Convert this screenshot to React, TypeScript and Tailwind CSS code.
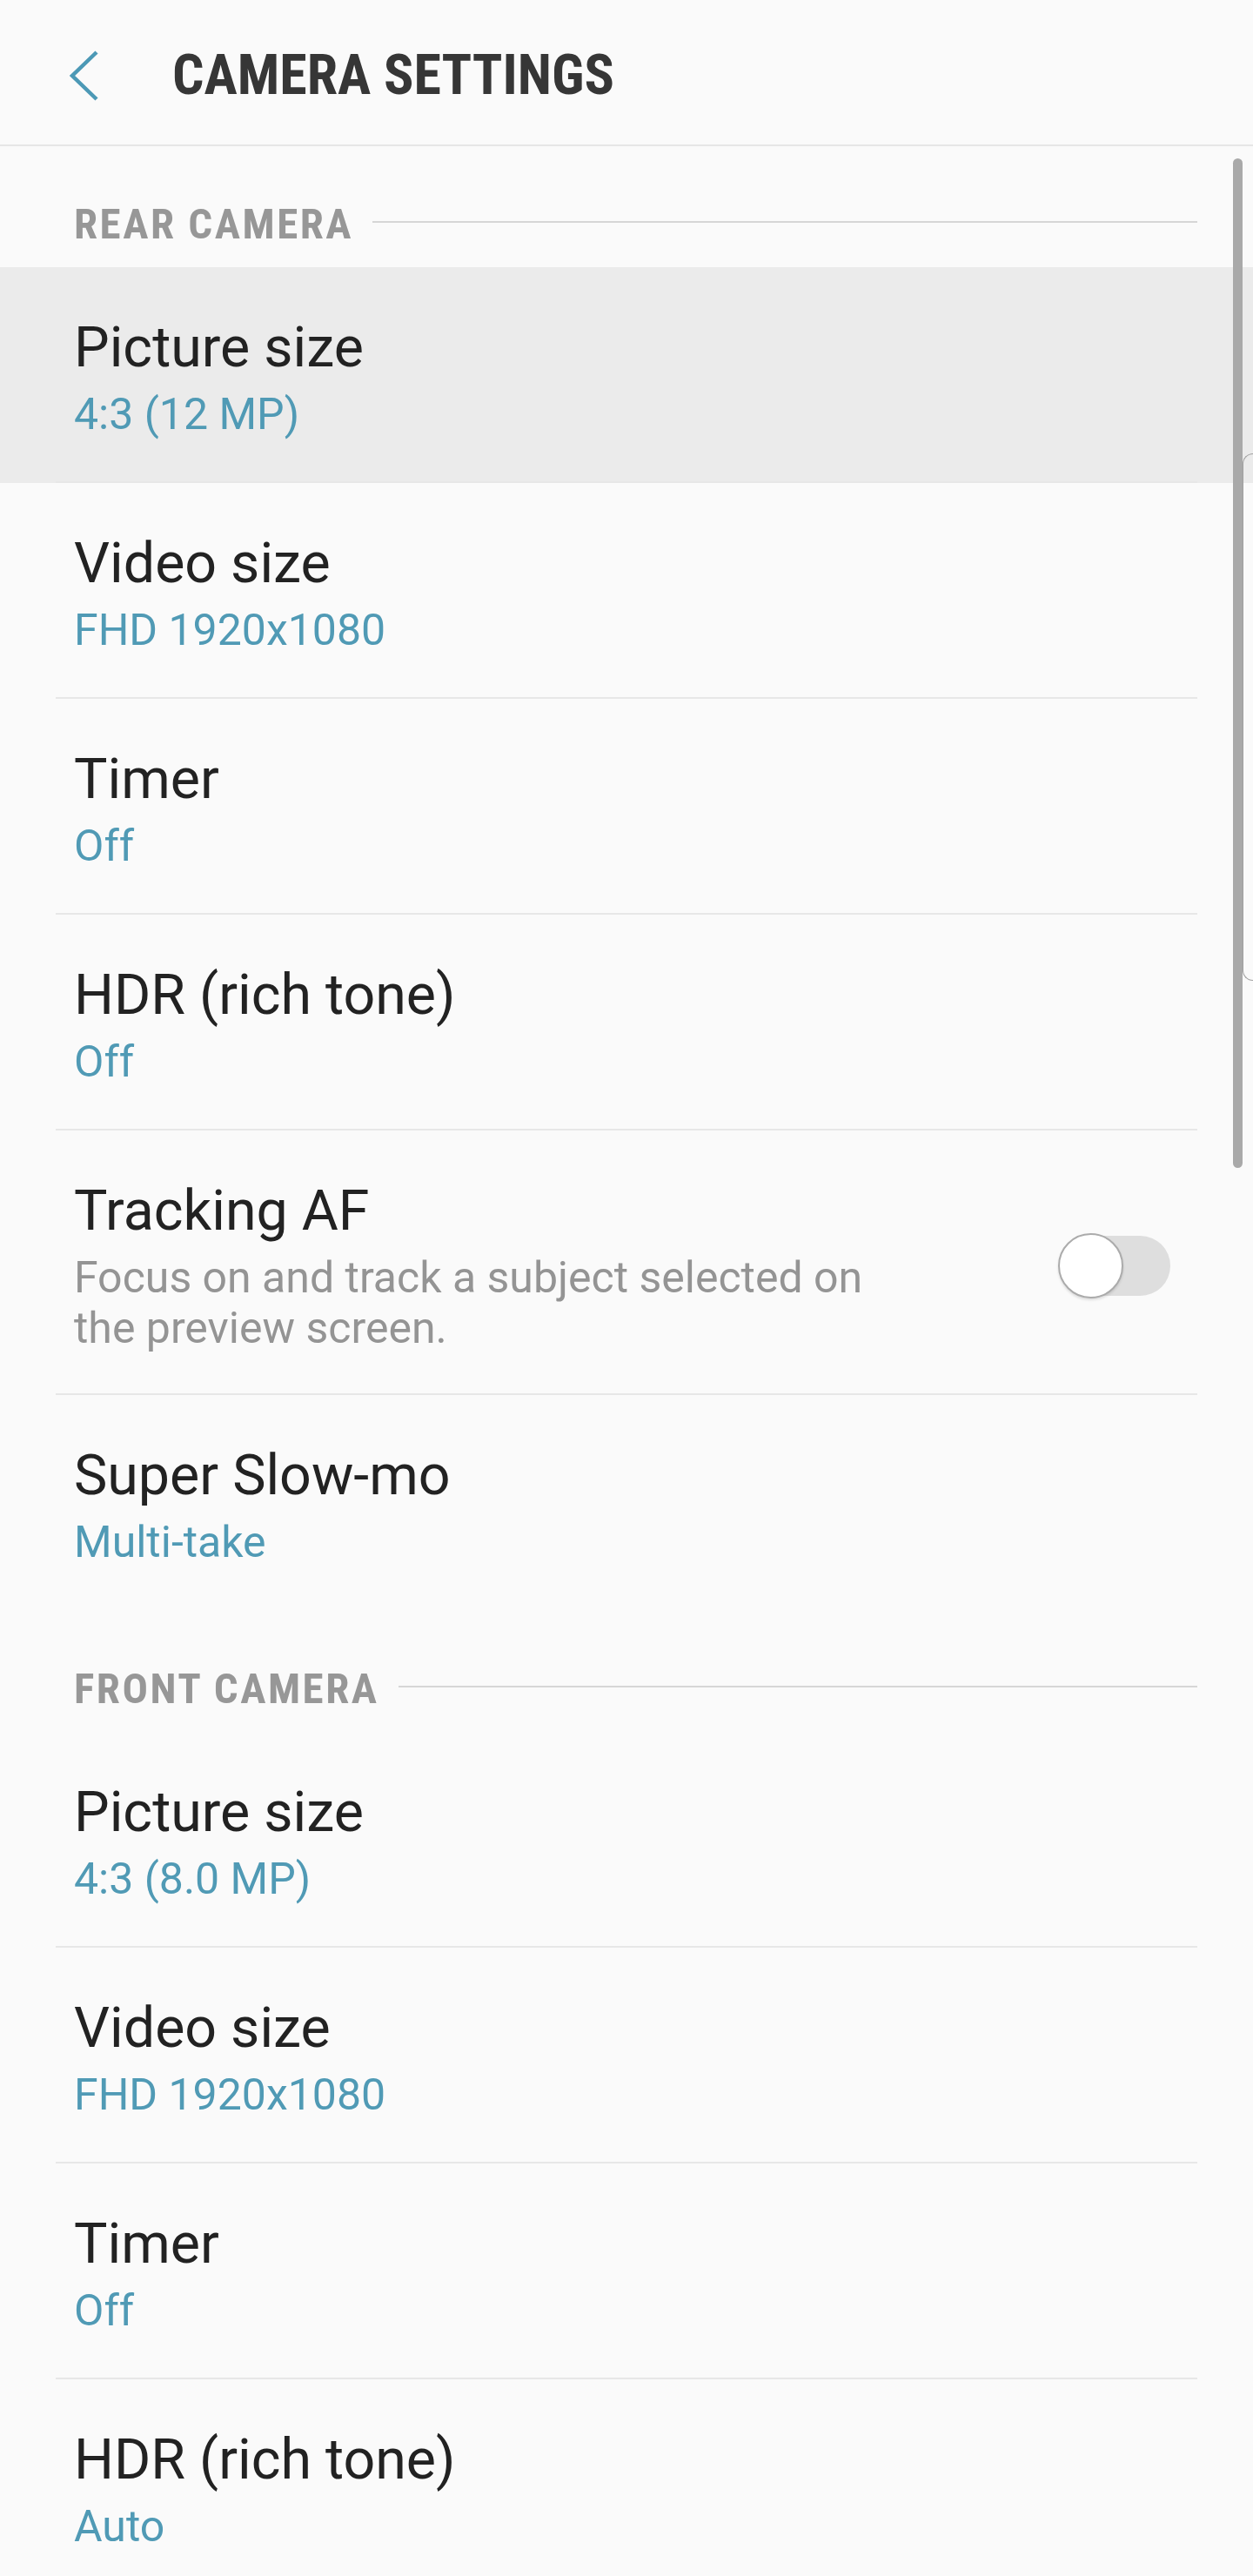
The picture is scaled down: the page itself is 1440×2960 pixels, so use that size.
import React from 'react';

type Item = {
  title: string;
  value?: string;
  desc?: string;
  toggle?: boolean;
  active?: boolean;
  tight?: boolean;
  noDivider?: boolean;
};

const rear: Item[] = [
  { title: 'Picture size', value: '4:3 (12 MP)', active: true },
  { title: 'Video size', value: 'FHD 1920x1080' },
  { title: 'Timer', value: 'Off' },
  { title: 'HDR (rich tone)', value: 'Off' },
  { title: 'Tracking AF', desc: 'Focus on and track a subject selected on the preview screen.', toggle: true, tight: true },
  { title: 'Super Slow-mo', value: 'Multi-take', noDivider: true },
];

const front: Item[] = [
  { title: 'Picture size', value: '4:3 (8.0 MP)' },
  { title: 'Video size', value: 'FHD 1920x1080' },
  { title: 'Timer', value: 'Off' },
  { title: 'HDR (rich tone)', value: 'Auto' },
];

function SectionHeader({ label }: { label: string }) {
  return (
    <div className="flex items-center pl-[85px] pr-[64px] pt-[62px] pb-[21px]">
      <span className="font-[Roboto_Condensed,Liberation_Sans_Narrow,DejaVu_Sans_Condensed,Roboto,sans-serif] [font-stretch:condensed] text-[49px] leading-[56px] font-bold tracking-[2.5px] text-[#979797]">
        {label}
      </span>
      <div className="ml-[22px] mb-[6px] h-[2px] flex-1 bg-[#d6d6d6]" />
    </div>
  );
}

function Toggle() {
  return (
    <div className="relative h-[75px] w-[129px] shrink-0">
      <div className="absolute right-0 top-[3px] h-[69px] w-[118px] rounded-full bg-[#dedede]" />
      <div className="absolute left-0 top-0 h-[75px] w-[75px] rounded-full border-2 border-[#ababab] bg-white shadow-[0_2px_3px_rgba(0,0,0,0.12)]" />
    </div>
  );
}

function Row({ item }: { item: Item }) {
  return (
    <div className={item.active ? 'bg-[#ebebeb]' : ''}>
      <div className={`flex items-center pl-[85px] pr-[95px] pt-[54px] ${item.tight ? 'pb-[46px]' : 'pb-[48px]'}`}>
        <div className="flex-1">
          <div className="text-[64.5px] leading-[76px] text-[#222222]">{item.title}</div>
          {item.value && (
            <div className="mt-[10px] text-[50px] leading-[58px] text-[#509ab5]">{item.value}</div>
          )}
          {item.desc && (
            <div className="mt-[10px] max-w-[930px] text-[50px] leading-[58px] text-[#949494]">{item.desc}</div>
          )}
        </div>
        {item.toggle && <Toggle />}
      </div>
      <div className={`mx-[64px] h-[2px] ${item.noDivider ? '' : 'bg-[#e7e7e7]'}`} />
    </div>
  );
}

export default function App() {
  return (
    <div className="relative h-[2960px] w-[1440px] overflow-hidden bg-[#fafafa] font-[Roboto,Noto_Sans,sans-serif]">
      {/* top bar */}
      <header className="flex h-[168px] items-center border-b-2 border-[#e6e6e6] pt-[8px]">
        <svg className="ml-[78px]" width="36" height="58" viewBox="0 0 36 58" fill="none">
          <path d="M33 2 L5 29 L33 56" stroke="#4c99b6" strokeWidth="4.5" />
        </svg>
        <h1 className="ml-[84px] font-[Roboto_Condensed,Liberation_Sans_Narrow,DejaVu_Sans_Condensed,Roboto,sans-serif] [font-stretch:condensed] text-[64px] leading-[76px] font-bold text-[#363636]">
          CAMERA SETTINGS
        </h1>
      </header>

      <SectionHeader label="REAR CAMERA" />
      {rear.map((it) => (
        <Row key={'r' + it.title} item={it} />
      ))}

      <SectionHeader label="FRONT CAMERA" />
      {front.map((it) => (
        <Row key={'f' + it.title} item={it} />
      ))}

      {/* scroll thumb */}
      <div className="absolute left-[1417px] top-[182px] h-[1160px] w-[11px] rounded-full bg-[#a9a9a9]" />
      {/* edge panel handle */}
      <div className="absolute right-0 top-[521px] h-[606px] w-[12px] rounded-l-[12px] border border-r-0 border-[#a0a0a0]" />
    </div>
  );
}
